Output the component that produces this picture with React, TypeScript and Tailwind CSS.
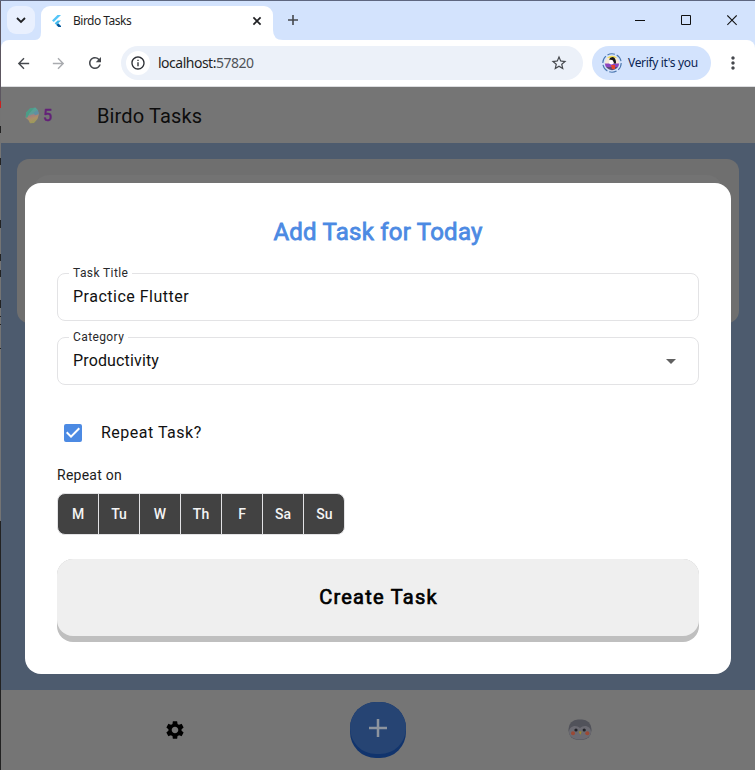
import React from "react";
import { MdSettings, MdArrowDropDown, MdCheckBox, MdArrowBack, MdArrowForward, MdRefresh, MdStarBorder, MdMoreVert, MdInfoOutline } from "react-icons/md";

const days = ["M", "Tu", "W", "Th", "F", "Sa", "Su"];

function FlutterLogo() {
  return (
    <svg width="9" height="12" viewBox="0 0 9 12">
      <path d="M5.5 0H9L1.8 7.1 0 5.4Z" fill="#54c5f8" />
      <path d="M5.6 5.4H9L6.2 8.2 4.4 10 2.7 8.3Z" fill="#40b9ee" />
      <path d="M4.4 10 6.2 8.2 9 11.1V12H6.4Z" fill="#01579b" />
    </svg>
  );
}

function Avatar() {
  return (
    <svg width="20" height="20" viewBox="0 0 20 20">
      <circle cx="10" cy="10" r="9.2" fill="none" stroke="#4c78b0" strokeWidth="1.1" strokeDasharray="7.6 2" />
      <clipPath id="face"><circle cx="10" cy="10" r="7.2" /></clipPath>
      <g clipPath="url(#face)">
        <path d="M0 0H20V20H0Z" fill="#f6ead6" />
        <path d="M0 0H20V5H0Z" fill="#f1dd5a" />
        <path d="M0 10.5H20V14H0Z" fill="#8d45c0" />
        <path d="M0 14H20V20H0Z" fill="#5b4a78" />
        <path d="M7 6.5Q8 4 10.5 4Q14 4 14 10.5H12L10 7Z" fill="#17171b" />
        <circle cx="9.3" cy="9.3" r="2.2" fill="#fff" />
        <path d="M9 12H13V16H10Z" fill="#e7462c" />
      </g>
    </svg>
  );
}

function BrowserChrome() {
  return (
    <div className="h-[86px] shrink-0 bg-[#d3e3fd] font-['Noto_Sans','Open_Sans',sans-serif]">
      <div className="flex h-[39px] items-end">
        <div className="mb-1.5 ml-1.5 flex h-7 w-7 items-center justify-center self-end rounded-[9px] bg-[#e9f0fe]">
          <svg width="10" height="7" viewBox="0 0 10 7" fill="none" stroke="#202124" strokeWidth="1.8"><path d="m1 1 4 4 4-4" /></svg>
        </div>
        <svg width="6" height="8" viewBox="0 0 6 8"><path d="M6 0Q6 8 0 8H6Z" fill="#fff" /></svg>
        <div className="flex h-[34px] w-[232px] items-center rounded-t-[9px] bg-white pr-[11px] pb-[5px] pl-[11px]">
          <FlutterLogo />
          <span className="ml-3 text-[12px] leading-4 tracking-[-0.5px] whitespace-nowrap text-[#1f1f1f]">Birdo Tasks</span>
          <svg className="ml-auto" width="10" height="10" viewBox="0 0 10 10" stroke="#202124" strokeWidth="1.7"><path d="m1.4 1.4 7.2 7.2M8.6 1.4 1.4 8.6" /></svg>
        </div>
        <svg width="10" height="10" viewBox="0 0 10 10"><path d="M0 0Q0 10 10 10H0Z" fill="#fff" /></svg>
        <svg className="mb-[14px] ml-[4px]" width="12" height="12" viewBox="0 0 12 12" stroke="#45484d" strokeWidth="1.6"><path d="M6 1V11M1 6H11" /></svg>
        <div className="mr-[18px] mb-[14px] ml-auto flex gap-9">
          <svg width="10" height="11" viewBox="0 0 10 11" stroke="#111"><path d="M0 5.5H10" /></svg>
          <svg width="10" height="11" viewBox="0 0 10 11" stroke="#111" fill="none"><path d="M.5.5H9.5V9.5H.5Z" /></svg>
          <svg width="10" height="11" viewBox="0 0 10 11" stroke="#111" fill="none" strokeWidth="1.1"><path d="m.3.5 9.4 9.4m0-9.4L.3 9.9" /></svg>
        </div>
      </div>
      <div className="flex h-[47px] items-center rounded-t-lg border-b border-[#dcdde0] bg-white pl-[14px]">
        <MdArrowBack size={17} color="#45484d" />
        <MdArrowForward className="ml-[18px]" size={17} color="#a9abaf" />
        <MdRefresh className="ml-[19px]" size={18} color="#45484d" />
        <div className="ml-[17px] flex h-[34px] w-[462px] items-center rounded-full bg-[#ecf1f9] pr-[15px] pl-[5px]">
          <div className="flex h-6 w-6 items-center justify-center rounded-full bg-white">
            <MdInfoOutline size={16} color="#2b2e33" />
          </div>
          <span className="ml-2 text-[14px] leading-5 tracking-[-0.5px] text-[#1f1f1f]">localhost:<span className="text-[#4f5358]">57820</span></span>
          <MdStarBorder className="ml-auto" size={18} color="#45484d" />
        </div>
        <div className="ml-[9px] flex h-[34px] w-[119px] items-center rounded-full bg-[#d3e3fd] pl-[10px]">
          <Avatar />
          <span className="ml-1.5 text-[12px] leading-4 tracking-[-0.33px] whitespace-nowrap text-[#0a2452]">Verify it's you</span>
        </div>
        <MdMoreVert className="ml-[12px]" size={20} color="#45484d" />
      </div>
    </div>
  );
}

function Egg() {
  return (
    <svg width="14" height="17" viewBox="0 0 14 17">
      <defs>
        <linearGradient id="egg" x1="0.25" y1="0" x2="0.5" y2="1">
          <stop offset="0" stopColor="#4fa596" /><stop offset=".42" stopColor="#5f9c98" />
          <stop offset=".52" stopColor="#a3807f" /><stop offset=".72" stopColor="#ab9168" /><stop offset="1" stopColor="#9a9a58" />
        </linearGradient>
      </defs>
      <path d="M1.2 5.5 5 1.6 10.5.6 12.8 3 14 7 12.5 12 9 16 5 16.3 3.4 13 .6 10.8Z" fill="url(#egg)" />
      <path d="m1.2 5.5 3.8-3.9 4-.6L4.2 6.6 2.4 10.4.6 10.8Z" fill="#4b9d86" />
      <path d="m8.5 5.8 4-2.8 1.5 4-4 1.2Z" fill="#5f8fa3" />
    </svg>
  );
}

function Bird() {
  return (
    <svg width="24" height="22" viewBox="0 0 24 22">
      <rect x=".5" y=".5" width="23" height="20.5" rx="9.5" fill="#51525a" />
      <path d="M1 13C1 7 8 5 12 9C16 5 23 7 23 13C23 23 1 23 1 13Z" fill="#6b6a72" />
      <circle cx="8" cy="11" r="1.6" fill="#202126" /><circle cx="16.2" cy="11" r="1.6" fill="#202126" />
      <circle cx="5" cy="14.3" r="2" fill="#9b4936" /><circle cx="19.3" cy="14.3" r="2" fill="#9b4936" />
      <path d="M10.7 12.4H13.7L12.3 15.7Z" fill="#a08c25" />
    </svg>
  );
}

function Field({ label, className, children }: { label: string; className: string; children: React.ReactNode }) {
  return (
    <fieldset className={"h-[56px] rounded-lg border border-[#e3e3e5] px-[11px] text-[#111] " + className}>
      <legend className="h-4 px-1 text-[12px] leading-4 tracking-[0.4px] whitespace-nowrap text-[#29292b]">{label}</legend>
      <div className="flex h-[31px] items-center justify-between pl-1 text-[16px] leading-6">{children}</div>
    </fieldset>
  );
}

function TaskDialog() {
  return (
    <div role="dialog" className="absolute top-[96px] left-6 flex h-[491px] w-[706px] flex-col rounded-2xl bg-white px-8 pt-8">
      <h1 className="h-8 text-center text-[24px] leading-[34px] font-normal tracking-[0.23px] text-[#4c8ae3] [-webkit-text-stroke:0.8px_#4c8ae3]">Add Task for Today</h1>
      <Field label="Task Title" className="mt-[18px]"><span className="tracking-[0.5px]">Practice Flutter</span></Field>
      <Field label="Category" className="mt-2"><span className="tracking-[0.15px]">Productivity</span><MdArrowDropDown className="mr-[4px]" size={24} color="#606060" /></Field>
      <div className="mt-9 flex h-6 items-center pl-1">
        <MdCheckBox size={24} color="#4c8ae3" />
        <span className="ml-4 text-[16px] leading-6 tracking-[0.5px] text-[#111]">Repeat Task?</span>
      </div>
      <div className="mt-5 h-5 text-[14px] leading-5 tracking-[0.25px] text-[#1c1c1c]">Repeat on</div>
      <div className="mt-2 flex h-[42px] w-[288px] overflow-hidden rounded-lg border border-[#e3e3e5] bg-[#424242]">
        {days.map((d, i) => (
          <div key={d} className={"flex w-[41px] shrink-0 items-center justify-center text-[14px] font-medium text-[#f4f4f4] " + (i < 6 ? "border-r border-[#e3e3e5]" : "")}>{d}</div>
        ))}
      </div>
      <button className="mt-6 h-[83px] rounded-2xl bg-[#bfbfbf] pb-1.5">
        <span className="flex h-[77px] items-center justify-center rounded-2xl bg-[#efefef] pb-0.5 pl-px text-[20px] leading-6 font-normal tracking-[1.25px] [-webkit-text-stroke:0.7px_#000]">Create Task</span>
      </button>
    </div>
  );
}

/* Sliver of the window that sits behind the browser's left edge. */
function BackgroundEdge() {
  return (
    <div className="flex w-px shrink-0 flex-col bg-[#747474]">
      <div className="h-[100px] bg-[#5c5660]" />
      <div className="h-[7px] bg-[#c82020]" />
      <div className="mt-[18px] h-[7px] bg-[#222]" />
      <div className="mt-[25px] h-[7px] bg-[#222]" />
      <div className="mt-[55px] h-[8px] bg-[#222]" />
      <div className="mt-[26px] h-[7px] bg-[#222]" />
      <div className="mt-[9px] h-[7px] bg-[#222]" />
      <div className="mt-[23px] h-[8px] bg-[#222]" />
      <div className="mt-[8px] h-px bg-[#222]" />
      <div className="mt-[7px] h-px bg-[#222]" />
      <div className="mt-[23px] h-px bg-[#222]" />
      <div className="mt-auto h-[249px] bg-[#222]" />
    </div>
  );
}

export default function App() {
  return (
    <div className="flex h-[770px] w-[755px] overflow-hidden border-t border-[#5e6780] font-[Roboto,sans-serif]">
      <BackgroundEdge />
      <div className="flex w-[754px] flex-col">
        <BrowserChrome />
        <main className="relative flex flex-1 flex-col bg-[#4d5b6e]">
          <header className="flex h-14 items-center bg-[#757575] pl-6">
            <Egg />
            <span className="mt-0.5 ml-1 w-[54px] text-[16px] font-normal text-[#632078] [-webkit-text-stroke:0.5px_#632078]">5</span>
            <span className="mt-0.5 text-[20px] leading-6 tracking-[0.15px] text-[#0d0d0d]">Birdo Tasks</span>
          </header>
          <section className="flex-1 px-4 pt-4">
            <div className="h-[164px] w-[722px] rounded-xl bg-[#6f6f6f] p-4">
              <div className="h-[132px] rounded-2xl bg-[#737373]" />
            </div>
          </section>
          <nav className="flex h-20 items-center bg-[#757575]">
            <div className="ml-[163px] flex w-[22px] justify-center"><MdSettings size={22} color="#000" /></div>
            <div className="ml-[164px] h-14 w-14 rounded-[26px] bg-[#11346d]">
              <div className="flex h-[52px] items-center justify-center rounded-[26px] bg-[#264473]">
                <svg width="18" height="18" viewBox="0 0 18 18" stroke="#8d949e" strokeWidth="2.5"><path d="M9 0V18M0 9H18" /></svg>
              </div>
            </div>
            <div className="ml-[162px]"><Bird /></div>
          </nav>
          <TaskDialog />
        </main>
      </div>
    </div>
  );
}
